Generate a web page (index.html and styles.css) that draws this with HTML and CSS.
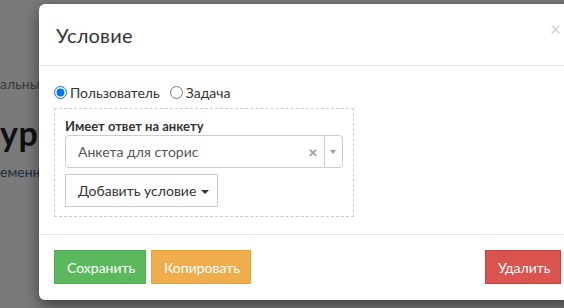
FILE: index.html
```html
<!DOCTYPE html>
<html lang="ru">
<head>
<meta charset="utf-8">
<link rel="stylesheet" href="styles.css">
</head>
<body>
<div class="page">
  <div class="crumb">альные</div>
  <h1 class="page-title">урс</h1>
  <div class="sub">еменные</div>
</div>
<div class="backdrop"></div>
<div class="modal">
  <div class="modal-header">
    <h4 class="modal-title">Условие</h4>
    <span class="close">&times;</span>
  </div>
  <div class="modal-body">
    <div class="radios">
      <label class="radio"><input type="radio" name="t" checked> Пользователь</label>
      <label class="radio"><input type="radio" name="t"> Задача</label>
    </div>
    <div class="cond-box">
      <div class="cond-label">Имеет ответ на анкету</div>
      <div class="select">
        <span class="select-value">Анкета для сторис</span>
        <span class="select-clear">&times;</span>
        <span class="select-arrow"></span>
      </div>
      <button class="btn btn-default">Добавить условие <span class="caret"></span></button>
    </div>
  </div>
  <div class="modal-footer">
    <div class="left">
      <button class="btn btn-success">Сохранить</button>
      <button class="btn btn-warning">Копировать</button>
    </div>
    <button class="btn btn-danger">Удалить</button>
  </div>
</div>
</body>
</html>
```
FILE: styles.css
```css
* { box-sizing: border-box; }
html, body { margin: 0; height: 100%; }
body {
  font-family: "Lato", "Open Sans", sans-serif;
  font-size: 14px;
  color: #333;
  background: #fff;
  overflow: hidden;
  position: relative;
}
.page {
  padding: 75px 0 0 0;
}
.crumb { font-size: 14px; line-height: 17px; color: #777; }
.page-title { margin: 21px 0 0; font-size: 34px; font-weight: 700; color: #222; line-height: 40px; letter-spacing: 0.5px; }
.sub { margin-top: 10px; font-size: 14px; line-height: 17px; color: #3a5f88; }
.backdrop {
  position: absolute; inset: 0;
  background: rgba(0, 0, 0, 0.52);
}
.modal {
  position: absolute;
  left: 39px; top: 4px;
  width: 537px;
  height: 296px;
  background: #fff;
  border-radius: 6px;
  box-shadow: 0 5px 15px rgba(0,0,0,0.5);
  display: flex;
  flex-direction: column;
}
.modal-header {
  height: 62px;
  border-bottom: 1px solid #e5e5e5;
  padding: 0 15px 0 17px;
  display: flex;
  align-items: center;
  justify-content: space-between;
}
.modal-title { margin: 0; font-size: 20px; font-weight: 400; color: #333; letter-spacing: 0.2px; }
.close { font-size: 19px; color: #d0d0d0; font-weight: 400; line-height: 1; margin-top: -12px; }
.modal-body { padding: 18px 15px 16px 15px; height: 169px; border-bottom: 1px solid #e5e5e5; }
.radios { display: flex; gap: 10px; align-items: center; height: 16px; }
.radio { display: flex; align-items: center; gap: 3px; color: #333; font-size: 14px; }
.radio input { margin: 0; width: 13px; height: 13px; }
.cond-box {
  margin-top: 8px;
  width: 300px;
  border: 1px dashed #ccc;
  padding: 10px 10px 9px 10px;
}
.cond-label { font-weight: 700; font-size: 13px; line-height: 15px; color: #333; }
.select {
  margin-top: 1px;
  height: 33px;
  border: 1px solid #ccc;
  border-radius: 4px;
  display: flex;
  align-items: center;
  padding-left: 12px;
}
.select-value { flex: 1; font-size: 14px; color: #555; }
.select-clear { width: 18px; font-size: 16px; font-weight: 700; color: #999; text-align: center; margin-right: 2px; }
.select-arrow {
  width: 18px; height: 100%;
  border-left: 1px solid #ccc;
  position: relative;
}
.select-arrow::after {
  content: ""; position: absolute; left: 5px; top: 14px;
  border: 3.5px solid transparent; border-top: 4px solid #999; border-bottom: 0;
}
.btn {
  font-family: inherit;
  font-size: 14px;
  height: 34px;
  padding: 0 12px;
  border: 1px solid transparent;
  border-radius: 0;
  color: #fff;
  cursor: pointer;
  white-space: nowrap;
}
.btn-default {
  display: block;
  margin-top: 6px;
  background: #fff;
  color: #333;
  border-color: #ccc;
  height: 33px;
  width: 153px;
  text-align: left;
}
.caret {
  display: inline-block; vertical-align: middle;
  border-top: 4px solid #333; border-left: 4px solid transparent; border-right: 4px solid transparent;
  margin-left: 1px;
}
.modal-footer {
  padding: 15px 15px 15px;
  display: flex;
  justify-content: space-between;
  align-items: flex-start;
}
.left { display: flex; gap: 5px; }
.btn-success { background: #5cb85c; border-color: #4cae4c; width: 92px; }
.btn-warning { background: #f0ad4e; border-color: #eea236; width: 100px; }
.btn-danger { background: #d9534f; border-color: #d43f3a; width: 76px; }
```
